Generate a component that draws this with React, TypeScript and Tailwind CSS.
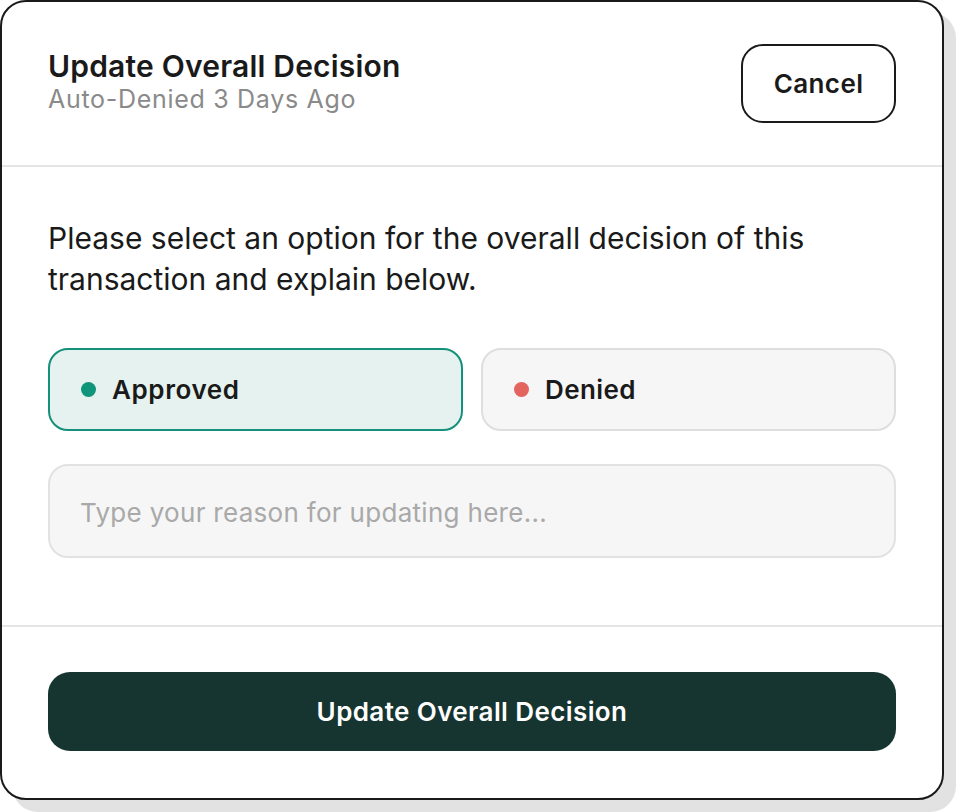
import { useState } from 'react'

export default function App() {
  const [choice, setChoice] = useState<'approved' | 'denied'>('approved')

  const optionClass = (active: boolean) =>
    active
      ? 'h-[83px] flex items-center gap-[16px] px-[31px] rounded-[20px] border-2 border-[#15907a] bg-[#e6f2ef]'
      : 'h-[83px] flex items-center gap-[16px] px-[31px] rounded-[20px] border-2 border-[#dedede] bg-[#f6f6f6]'

  return (
    <div className="min-h-screen bg-white font-['Inter',sans-serif] text-[#1a1a1a]">
      <div className="w-[944px] h-[800px] flex flex-col rounded-[26px] border-2 border-[#1a1a1a] bg-white shadow-[12px_12px_0_#e2e2e2]">
        {/* Header */}
        <div className="flex items-center justify-between px-[46px] h-[165px] border-b-2 border-[#e5e5e5]">
          <div className="pb-[5px]">
            <h1 className="text-[30px] leading-[36px] font-semibold tracking-[0.2px]">Update Overall Decision</h1>
            <p className="text-[25px] leading-[30px] tracking-[0.7px] text-[#8a8a8a]">Auto-Denied 3 Days Ago</p>
          </div>
          <button className="w-[155px] h-[79px] rounded-[22px] border-2 border-[#1a1a1a] text-[26px] font-semibold tracking-[0.4px]">
            Cancel
          </button>
        </div>

        {/* Body */}
        <div className="flex-1 px-[46px] pt-[51px]">
          <p className="text-[30px] leading-[41px]">
            Please select an option for the overall decision of this transaction and explain below.
          </p>
          <div className="mt-[48px] grid grid-cols-2 gap-[18px]">
            <button onClick={() => setChoice('approved')} className={optionClass(choice === 'approved')}>
              <span className="w-[15px] h-[15px] rounded-full bg-[#10957a]" />
              <span className="text-[26px] font-semibold tracking-[0.6px]">Approved</span>
            </button>
            <button onClick={() => setChoice('denied')} className={optionClass(choice === 'denied')}>
              <span className="w-[15px] h-[15px] rounded-full bg-[#e4645f]" />
              <span className="text-[26px] font-semibold tracking-[0.4px]">Denied</span>
            </button>
          </div>
          <input
            className="mt-[33px] w-full h-[94px] rounded-[20px] border-2 border-[#e2e2e2] bg-[#f6f6f6] px-[30px] pt-[3px] text-[26px] tracking-[0.3px] outline-none placeholder:text-[#a9a9a9]"
            placeholder="Type your reason for updating here..."
          />
        </div>

        {/* Footer */}
        <div className="border-t-2 border-[#e5e5e5] px-[46px] pt-[45px] pb-[47px]">
          <button className="w-full h-[79px] rounded-[22px] bg-[#173530] text-white text-[26px] font-semibold tracking-[0.4px]">
            Update Overall Decision
          </button>
        </div>
      </div>
    </div>
  )
}
